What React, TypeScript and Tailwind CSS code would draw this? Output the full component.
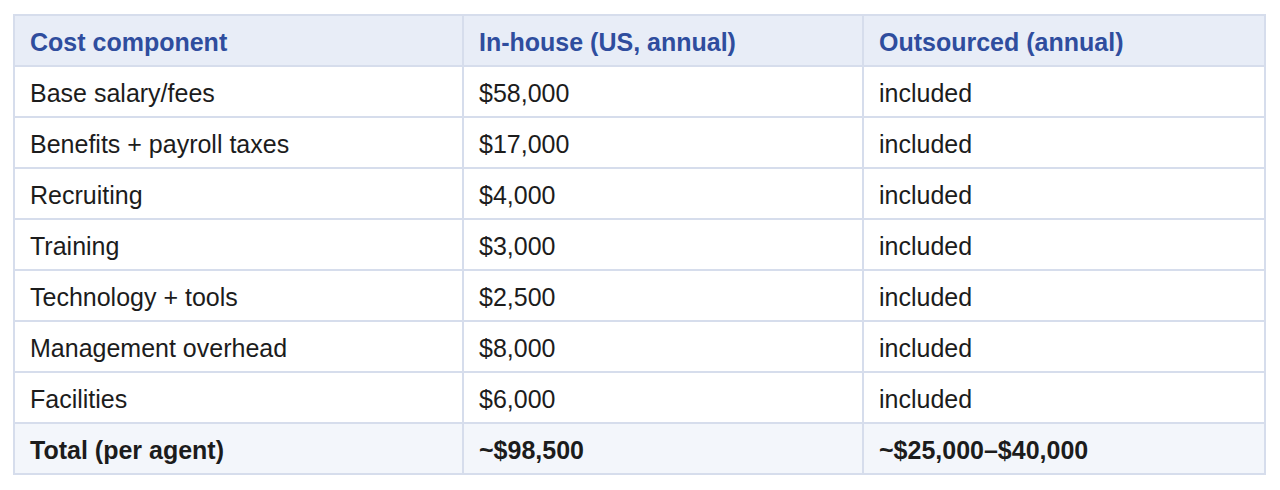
const rows: [string, string, string][] = [
  ['Base salary/fees', '$58,000', 'included'],
  ['Benefits + payroll taxes', '$17,000', 'included'],
  ['Recruiting', '$4,000', 'included'],
  ['Training', '$3,000', 'included'],
  ['Technology + tools', '$2,500', 'included'],
  ['Management overhead', '$8,000', 'included'],
  ['Facilities', '$6,000', 'included'],
];

const cell = 'border-2 border-[#d6ddec] px-[15px] pt-[10px] pb-[6px] text-left leading-[33px]';

export default function App() {
  return (
    <div className="min-h-[490px] bg-white pl-[13px] pt-[14px] font-['Liberation_Sans',Arial,sans-serif] text-[25px] text-[#1c1c1c]">
      <table className="w-[1251px] table-fixed border-collapse">
        <colgroup>
          <col className="w-[449px]" />
          <col className="w-[400px]" />
          <col className="w-[402px]" />
        </colgroup>
        <thead>
          <tr className="bg-[#e8edf7] font-bold text-[#2f4d9e]">
            <th className={cell}>Cost component</th>
            <th className={cell}>In-house (US, annual)</th>
            <th className={cell}>Outsourced (annual)</th>
          </tr>
        </thead>
        <tbody>
          {rows.map(([name, inHouse, outsourced]) => (
            <tr key={name}>
              <td className={cell}>{name}</td>
              <td className={cell}>{inHouse}</td>
              <td className={cell}>{outsourced}</td>
            </tr>
          ))}
          <tr className="bg-[#f3f6fb] font-bold">
            <td className={cell}>Total (per agent)</td>
            <td className={cell}>~$98,500</td>
            <td className={cell}>~$25,000–$40,000</td>
          </tr>
        </tbody>
      </table>
    </div>
  );
}
